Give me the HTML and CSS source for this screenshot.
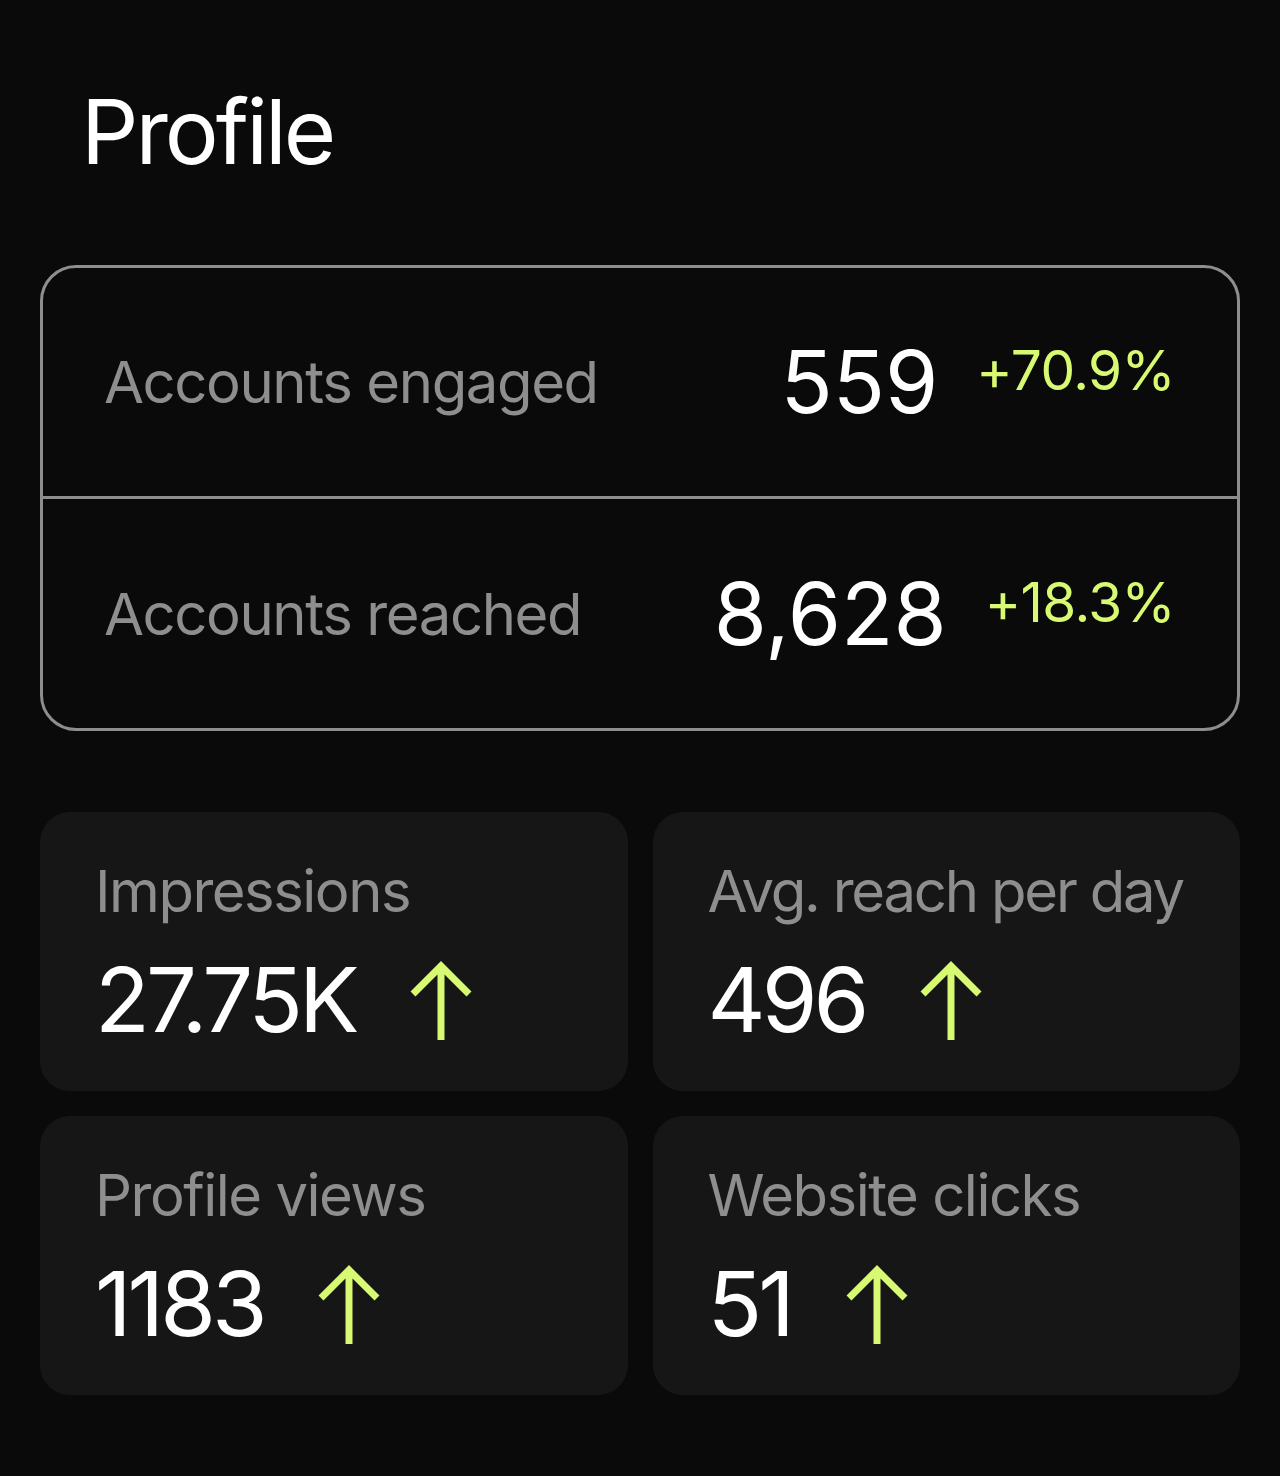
FILE: index.html
```html
<!DOCTYPE html>
<html lang="en">
<head>
  <meta charset="UTF-8" />
  <title>Profile insights</title>
  <link rel="stylesheet" href="styles.css">
</head>
<body>
  <div class="page">
    <h1 class="title">Profile</h1>

    <div class="summary">
      <div class="summary-row">
        <span class="summary-label">Accounts engaged</span>
        <div class="summary-value">
          <span class="big-num">559</span>
          <span class="change">+70.9%</span>
        </div>
      </div>
      <div class="summary-row">
        <span class="summary-label">Accounts reached</span>
        <div class="summary-value">
          <span class="big-num">8,628</span>
          <span class="change">+18.3%</span>
        </div>
      </div>
    </div>

    <div class="stats">
      <div class="stat-card">
        <div class="stat-label">Impressions</div>
        <div class="stat-value">
          <span>27.75K</span>
          <svg class="up" viewBox="0 0 64 80"><path d="M32 80V6M4 34L32 6L60 34"/></svg>
        </div>
      </div>
      <div class="stat-card">
        <div class="stat-label tight">Avg. reach per day</div>
        <div class="stat-value">
          <span>496</span>
          <svg class="up" viewBox="0 0 64 80"><path d="M32 80V6M4 34L32 6L60 34"/></svg>
        </div>
      </div>
      <div class="stat-card">
        <div class="stat-label">Profile views</div>
        <div class="stat-value">
          <span>1183</span>
          <svg class="up" viewBox="0 0 64 80"><path d="M32 80V6M4 34L32 6L60 34"/></svg>
        </div>
      </div>
      <div class="stat-card">
        <div class="stat-label">Website clicks</div>
        <div class="stat-value">
          <span>51</span>
          <svg class="up" viewBox="0 0 64 80"><path d="M32 80V6M4 34L32 6L60 34"/></svg>
        </div>
      </div>
    </div>
  </div>
</body>
</html>
```

FILE: styles.css
```css
body {
  margin: 0;
  background: #0a0a0a;
  font-family: Inter, 'Noto Sans', sans-serif;
  color: #fff;
}

.page {
  padding: 87px 40px 0;
}

.title {
  margin: 0 0 0 41px;
  font-size: 90px;
  line-height: 90px;
  font-weight: 400;
  letter-spacing: -3px;
}

.summary {
  margin-top: 88px;
  border: 3px solid #8e8e8e;
  border-radius: 36px;
}

.summary-row {
  display: flex;
  align-items: center;
  justify-content: space-between;
  height: 228px;
  padding: 0 62px 0 61px;
}

.summary-row + .summary-row {
  border-top: 3px solid #8e8e8e;
  height: 229px;
}

.summary-label {
  font-size: 58px;
  color: #8e8e8e;
  letter-spacing: -1.4px;
  white-space: nowrap;
}

.summary-value {
  display: flex;
  align-items: flex-start;
  gap: 38px;
}

.big-num {
  font-size: 86px;
  line-height: 1;
}

.change {
  margin-top: 4px;
  font-size: 55px;
  line-height: 1;
  color: #d8fa72;
  letter-spacing: -0.6px;
}

.stats {
  margin-top: 81px;
  display: grid;
  grid-template-columns: 1fr 1fr;
  gap: 25px;
}

.stat-card {
  background: #161616;
  border-radius: 30px;
  padding: 50px 40px 46px 55px;
}

.stat-label {
  font-size: 58px;
  line-height: 1;
  color: #8e8e8e;
  letter-spacing: -1.5px;
  white-space: nowrap;
}

.stat-label.tight {
  letter-spacing: -2.2px;
}

.stat-value {
  margin-top: 35px;
  display: flex;
  align-items: center;
  gap: 54px;
  font-size: 90px;
  line-height: 1;
  letter-spacing: -4px;
}

.up {
  width: 64px;
  height: 80px;
  fill: none;
  stroke: #d8fa72;
  stroke-width: 7;
}
```
